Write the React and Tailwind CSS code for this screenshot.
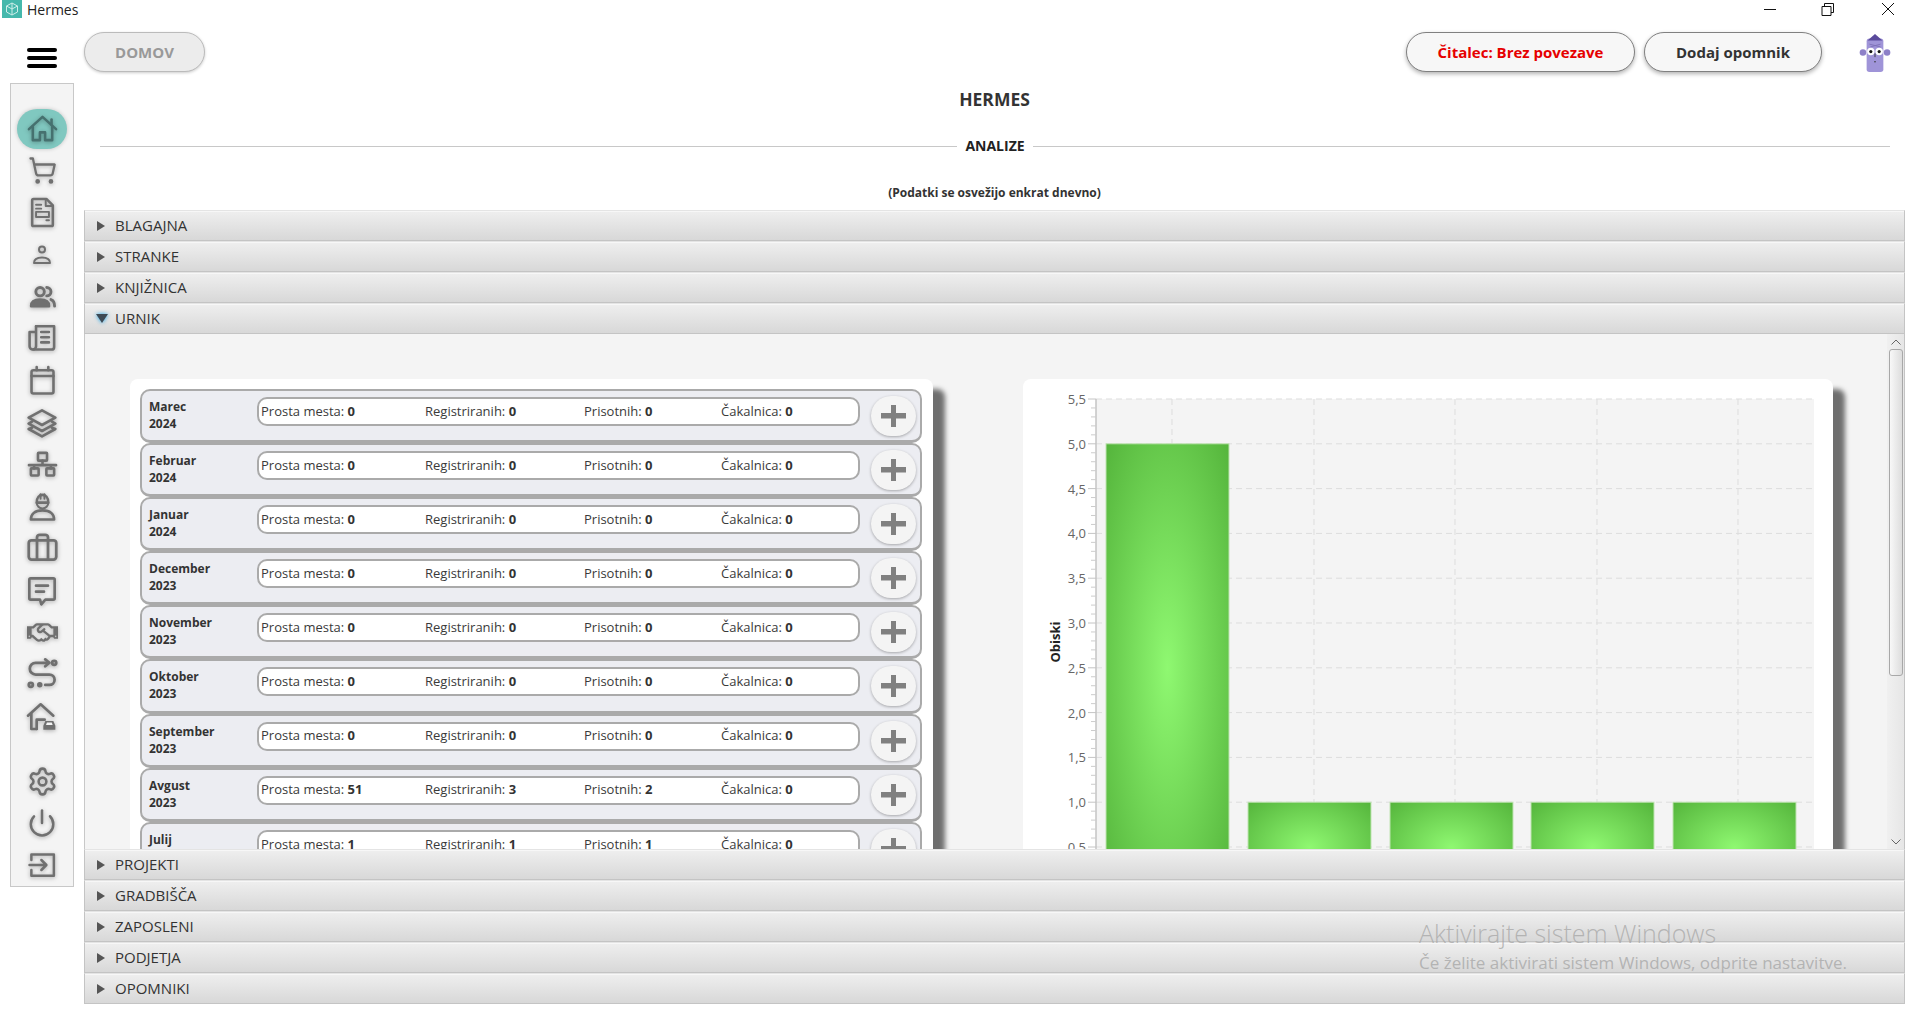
import React from "react";
import { ShoppingCart, Briefcase, Settings, Power } from "lucide-react";
import { FaRegHandshake } from "react-icons/fa";

const months = [
  { name: "Marec", year: 2024, free: 0, reg: 0, here: 0, wait: 0 },
  { name: "Februar", year: 2024, free: 0, reg: 0, here: 0, wait: 0 },
  { name: "Januar", year: 2024, free: 0, reg: 0, here: 0, wait: 0 },
  { name: "December", year: 2023, free: 0, reg: 0, here: 0, wait: 0 },
  { name: "November", year: 2023, free: 0, reg: 0, here: 0, wait: 0 },
  { name: "Oktober", year: 2023, free: 0, reg: 0, here: 0, wait: 0 },
  { name: "September", year: 2023, free: 0, reg: 0, here: 0, wait: 0 },
  { name: "Avgust", year: 2023, free: 51, reg: 3, here: 2, wait: 0 },
  { name: "Julij", year: 2023, free: 1, reg: 1, here: 1, wait: 0 },
];

function Svg({ size = 30, children, className = "text-[#707070]" }) {
  return (
    <svg
      width={size}
      height={size}
      viewBox="0 0 24 24"
      fill="none"
      stroke="currentColor"
      strokeWidth="2"
      strokeLinecap="round"
      strokeLinejoin="round"
      className={className + " drop-shadow-[0_1px_2px_rgba(0,0,0,0.3)]"}
    >
      {children}
    </svg>
  );
}

const HomeIcon = () => (
  <Svg size={31} className="text-[#46716f]">
    <path d="M1.500 12.500 12 3l10.500 9.500" />
    <path d="M19 9V5" />
    <path d="M4.500 10.500V21h5.500v-6h4v6h5.500V10.500" />
  </Svg>
);
const DocIcon = () => (
  <Svg size={31}>
    <path d="M5 1.500h10l5 5V21.500a1 1 0 0 1-1 1H5a1 1 0 0 1-1-1v-19a1 1 0 0 1 1-1z" />
    <path d="M14.500 1.500V7H20" strokeWidth="1.500" />
    <path d="M7 6h4M7 9h4M15 18h2" strokeWidth="1.500" />
    <rect x="7" y="11.500" width="10" height="4" strokeWidth="1.500" />
  </Svg>
);
const PersonIcon = () => (
  <Svg size={24}>
    <circle cx="12" cy="6.500" r="3" />
    <path d="M4 20c0-4 3-5.500 8-5.500s8 1.500 8 5.500z" />
  </Svg>
);
const UsersIcon = () => (
  <Svg size={29}>
    <circle cx="10" cy="8" r="3.500" strokeWidth="2.400" />
    <path d="M2.500 20c0-4 3-5.500 7.500-5.500s7.500 1.500 7.500 5.500z" fill="currentColor" />
    <path d="M15.500 4.500a3.500 3.500 0 0 1 0 7" strokeWidth="2.400" />
    <path d="M19 14.500c2 .7 3 2.500 3 5.500" strokeWidth="2.400" />
  </Svg>
);
const PagesIcon = () => (
  <Svg size={31}>
    <path d="M7 2.500h14v16a2 2 0 0 1-2 2H5" />
    <path d="M7 2.500V18a2.500 2.500 0 0 1-5 0V7h5" />
    <path d="M11 7h6M11 11h6M11 15h6" />
  </Svg>
);
const CalendarIcon = () => (
  <Svg size={31}>
    <rect x="3.500" y="4" width="17" height="18" rx="1.500" />
    <path d="M3.500 8.500h17M7.500 1.500V4M16.500 1.500V4" />
  </Svg>
);
const LayersIcon = () => (
  <Svg size={32}>
    <path d="M12 2.500 22 8l-10 5.500L2 8z" />
    <path d="m4.500 11-2.500 1.500 10 5.500 10-5.500-2.500-1.500" />
    <path d="m4.500 15.500-2.500 1 10 5.500 10-5.500-2.500-1" />
  </Svg>
);
const NetworkIcon = () => (
  <Svg size={31}>
    <rect x="8.500" y="3" width="7" height="6" rx="0.500" />
    <path d="M12 9v3.500M1.500 12.500h21M5.500 12.500V15M18.500 12.500V15" />
    <rect x="3" y="15" width="6" height="5.500" rx="0.500" />
    <rect x="15" y="15" width="6" height="5.500" rx="0.500" />
  </Svg>
);
const WorkerIcon = () => (
  <Svg size={31}>
    <path d="M7.500 9c0-8 9-8 9 0z" />
    <path d="M7.500 9a4.500 4.500 0 0 0 9 0M10.500 2.500V6M13.500 2.500V6" strokeWidth="1.500" />
    <path d="M3 22c0-4 3-7 9-7s9 3 9 7z" />
  </Svg>
);
const MessageIcon = () => (
  <Svg size={32}>
    <path d="M3.500 2.500h17a1 1 0 0 1 1 1v14a1 1 0 0 1-1 1h-6l-3 3.500-1-3.500h-7a1 1 0 0 1-1-1v-14a1 1 0 0 1 1-1z" />
    <path d="M7.500 8h9M7.500 12.500h6" />
  </Svg>
);
const RouteIcon = () => (
  <Svg size={33}>
    <path d="M16.500 3.500H7a4 4 0 0 0 0 8.500h10a3.800 3.800 0 0 1 0 7.600h-3" />
    <path d="m14 1 3 2.500L14 6" />
    <circle cx="20.500" cy="3.500" r="1.500" />
    <circle cx="3.500" cy="19.500" r="1.500" />
    <circle cx="10" cy="19.500" r="1" fill="currentColor" />
  </Svg>
);
const GarageIcon = () => (
  <Svg size={32}>
    <path d="M1.500 11 11 2.500 20.500 11" />
    <path d="M4 9.500V21h4" />
    <path d="M8 21v-7h6" />
    <path d="M13 21.500v-3l1.500-3.500h6l1.500 3.500v3z" fill="currentColor" stroke="none" />
    <path d="M15 18l.7-1.800h3.600l.7 1.800z" fill="#f4f4f4" stroke="none" />
  </Svg>
);
const EnterIcon = () => (
  <Svg size={30}>
    <path d="M3.500 8V3.500h18v17h-18V16" />
    <path d="M2 12h13M11.500 8l4 4-4 4" />
  </Svg>
);

const Lucide = ({ icon: Icon, size = 30, stroke = 2 }) => (
  <Icon size={size} strokeWidth={stroke} className="text-[#707070] drop-shadow-[0_1px_2px_rgba(0,0,0,0.3)]" />
);

const sideIcons = [
  <Lucide key="cart" icon={ShoppingCart} size={29} stroke={1.9} />,
  <DocIcon key="doc" />,
  <PersonIcon key="person" />,
  <UsersIcon key="users" />,
  <PagesIcon key="pages" />,
  <CalendarIcon key="cal" />,
  <LayersIcon key="layers" />,
  <NetworkIcon key="net" />,
  <WorkerIcon key="worker" />,
  <Lucide key="case" icon={Briefcase} size={33} />,
  <MessageIcon key="msg" />,
  <FaRegHandshake key="hand" size={31} className="text-[#707070] drop-shadow-[0_1px_2px_rgba(0,0,0,0.3)]" />,
  <RouteIcon key="route" />,
  <GarageIcon key="garage" />,
];

function Sidebar() {
  return (
    <div className="flex flex-col items-center w-[64px] ml-[10px] mt-[11px] h-[804px] pt-[24px] bg-[#f4f4f4] border border-[#c8c8c8]">
      <div className="h-[42.3px] flex items-center justify-center">
        <div className="w-[50px] h-[40px] rounded-full bg-[#80c8c0] flex items-center justify-center shadow-[0_0_4px_rgba(0,0,0,0.2)]">
          <HomeIcon />
        </div>
      </div>
      {sideIcons.map((icon) => (
        <div key={icon.key} className="h-[42.3px] flex items-center justify-center">
          {icon}
        </div>
      ))}
      <div className="h-[22.7px]" />
      <div className="h-[42.3px] flex items-center justify-center">
        <Lucide icon={Settings} size={31} />
      </div>
      <div className="h-[42.3px] flex items-center justify-center">
        <Lucide icon={Power} size={30} />
      </div>
      <div className="h-[42.3px] flex items-center justify-center">
        <EnterIcon />
      </div>
    </div>
  );
}

function Avatar() {
  return (
    <svg width="32" height="39" viewBox="0 0 34 42">
      <rect x="8" y="6" width="18" height="36" rx="3" fill="#9f94d8" />
      <path d="M9 8 17 1l8 7z" fill="#5a4a9c" />
      <path d="M11 12l12 3M12 15l11-3" stroke="#7d70b8" strokeWidth="1" />
      <circle cx="4" cy="21" r="3.500" fill="#8d80c8" />
      <circle cx="30" cy="21" r="3.500" fill="#8d80c8" />
      <circle cx="12.500" cy="20" r="4" fill="#fff" />
      <circle cx="21.500" cy="20" r="4" fill="#fff" />
      <circle cx="12.500" cy="20" r="1.700" fill="#111" />
      <circle cx="21.500" cy="20" r="1.700" fill="#111" />
      <path d="M17 22v4M16 31h2" stroke="#333" strokeWidth="1" />
    </svg>
  );
}

function TopBar() {
  return (
    <div className="flex items-center h-[40px] mt-[14px] pr-[15px]">
      <button className="w-[121px] h-[40px] pt-[1px] rounded-full bg-[#ececec] border border-[#bbbbbb] text-[#999999] font-bold text-[15px] shadow-[0_1px_3px_rgba(0,0,0,0.2)]">
        DOMOV
      </button>
      <button className="ml-auto w-[229px] h-[40px] pt-[1px] rounded-full bg-[#f7f7f7] border border-[#808080] text-[#e60000] font-bold text-[15px] shadow-[0_2px_4px_rgba(0,0,0,0.3)]">
        Čitalec: Brez povezave
      </button>
      <button className="ml-[9px] w-[178px] h-[40px] pt-[1px] rounded-full bg-[#f7f7f7] border border-[#808080] text-[#333333] font-bold text-[15px] shadow-[0_2px_4px_rgba(0,0,0,0.3)]">
        Dodaj opomnik
      </button>
      <div className="ml-[37px] mr-[14px]">
        <Avatar />
      </div>
    </div>
  );
}

function PaneHeader({ title, open }) {
  return (
    <div className="h-[31px] flex items-center bg-gradient-to-b from-[#efefef] to-[#d8d8d8] border border-[#c4c4c4] border-t-[#e4e4e4] shadow-[inset_0_1px_0_#f7f7f7]">
      {open ? (
        <span className="ml-[11px] w-0 h-0 border-x-[6px] border-x-transparent border-t-[9px] border-t-[#3d4a55] drop-shadow-[0_0_2px_#1aa3e8]" />
      ) : (
        <span className="ml-[12px] w-0 h-0 border-y-[5px] border-y-transparent border-l-[8px] border-l-[#555555]" />
      )}
      <span className={(open ? "ml-[7px]" : "ml-[10px]") + " text-[15px] text-[#333333]"}>{title}</span>
    </div>
  );
}

function MonthRow({ m }) {
  return (
    <div className="h-[54.1px] flex items-start bg-[#ecedf2] border-2 border-b-[3px] border-[#aaaaaa] rounded-[10px]">
      <div className="w-[115px] pl-[7px] pt-[7px] text-[12px] leading-[17px] font-bold text-[#333333]">
        <div>{m.name}</div>
        <div>{m.year}</div>
      </div>
      <div className="w-[603px] h-[29px] mt-[6px] flex items-center pl-[2px] bg-white border-2 border-[#aaaaaa] rounded-[10px] text-[13px] text-[#3a3a3a]">
        <span className="w-[164px]">
          Prosta mesta: <b className="text-[#333333]">{m.free}</b>
        </span>
        <span className="w-[159px]">
          Registriranih: <b className="text-[#333333]">{m.reg}</b>
        </span>
        <span className="w-[137px]">
          Prisotnih: <b className="text-[#333333]">{m.here}</b>
        </span>
        <span>
          Čakalnica: <b className="text-[#333333]">{m.wait}</b>
        </span>
      </div>
      <button className="ml-[11px] mt-[5px] w-[45px] h-[40px] rounded-full bg-[#f4f4f4] flex items-center justify-center shadow-[0_1px_3px_rgba(0,0,0,0.3)]">
        <svg width="25" height="22" viewBox="0 0 25 22">
          <path d="M0 8h10V0h5v8h10v5.500H15V22h-5v-8.500H0z" fill="#808080" />
        </svg>
      </button>
    </div>
  );
}

function Chart() {
  const yTicks = [5.5, 5, 4.5, 4, 3.5, 3, 2.5, 2, 1.5, 1, 0.5];
  const y = (v) => 20 + (5.5 - v) * 89.6;
  const minor = [];
  for (let i = 0; i <= 55; i++) {
    if (i % 5 !== 0) minor.push(20 + i * 8.96);
  }
  const xGrid = [149, 291, 432, 574, 715];
  const bars = [
    { x: 83, v: 5 },
    { x: 225, v: 1 },
    { x: 367, v: 1 },
    { x: 508, v: 1 },
    { x: 650, v: 1 },
  ];
  return (
    <svg width="810" height="540" viewBox="0 0 810 540" className="block">
      <defs>
        <radialGradient id="barFill" cx="50%" cy="50%" r="70%">
          <stop offset="0%" stopColor="#8ff871" />
          <stop offset="100%" stopColor="#55b53c" />
        </radialGradient>
      </defs>
      <rect x="73" y="20" width="718" height="520" fill="#f4f4f4" />
      {yTicks.map((t) => (
        <line key={t} x1="73" x2="791" y1={y(t)} y2={y(t)} stroke="#dddddd" strokeDasharray="6 4" />
      ))}
      {xGrid.map((x) => (
        <line key={x} x1={x} x2={x} y1="20" y2="540" stroke="#dddddd" strokeDasharray="6 4" />
      ))}
      <line x1="73" x2="73" y1="20" y2="540" stroke="#c4c4c4" strokeWidth="1.500" />
      {minor.map((v) => (
        <line key={v} x1="68" x2="73" y1={v} y2={v} stroke="#cccccc" />
      ))}
      {yTicks.map((t) => (
        <g key={t}>
          <line x1="65" x2="73" y1={y(t)} y2={y(t)} stroke="#c4c4c4" />
          <text x="63" y={y(t) + 5} textAnchor="end" fontSize="13" fill="#666666">
            {t.toFixed(1).replace(".", ",")}
          </text>
        </g>
      ))}
      <text
        transform="translate(37 263) rotate(-90)"
        textAnchor="middle"
        fontSize="13"
        fontWeight="700"
        fill="#222222"
      >
        Obiski
      </text>
      {bars.map((b) => (
        <rect
          key={b.x}
          x={b.x}
          y={y(b.v)}
          width="123"
          height={513 - y(b.v)}
          fill="url(#barFill)"
          stroke="#bfe3b2"
        />
      ))}
    </svg>
  );
}

function Scrollbar() {
  return (
    <div className="w-[18px] flex flex-col items-center shrink-0 bg-gradient-to-r from-[#f0f0f0] to-[#e6e6e6] border-r border-[#c4c4c4]">
      <svg width="12" height="8" viewBox="0 0 12 8" className="mt-[4px] mb-[3px]">
        <path d="M1.500 6.500 6 2l4.500 4.500" fill="none" stroke="#666666" />
      </svg>
      <div className="w-[14px] h-[327px] rounded-[3px] border border-[#a8a8a8] bg-gradient-to-r from-[#f8f8f8] to-[#dddddd]" />
      <svg width="12" height="8" viewBox="0 0 12 8" className="mt-auto mb-[3px]">
        <path d="M1.500 1.500 6 6l4.500-4.500" fill="none" stroke="#666666" />
      </svg>
    </div>
  );
}

function UrnikPane() {
  return (
    <div className="h-[515px] flex bg-[#f4f4f4] border-l border-[#c8c8c8] overflow-hidden">
      <div className="flex-1 min-w-0 flex items-start gap-[90px] pl-[45px] pt-[45px] overflow-hidden">
        <div className="w-[803px] shrink-0 h-[560px] pl-[10px] pr-[11px] pt-[10px] bg-white rounded-lg shadow-[12px_10px_5px_rgba(0,0,0,0.55)]">
          {months.map((m) => (
            <MonthRow key={m.name} m={m} />
          ))}
        </div>
        <div className="w-[810px] shrink-0 h-[560px] bg-white rounded-lg shadow-[12px_10px_5px_rgba(0,0,0,0.55)]">
          <Chart />
        </div>
      </div>
      <Scrollbar />
    </div>
  );
}

export default function App() {
  return (
    <div className="relative w-[1920px] h-[1023px] overflow-hidden bg-white font-['Open_Sans',sans-serif]">
      <div className="h-[18px] flex items-center text-[14px] text-[#222222]">
        <div className="ml-[2px] w-[20px] h-[18px] bg-[#45b8ac] flex items-center justify-center">
          <svg width="14" height="14" viewBox="0 0 14 14" fill="none" stroke="#cdeeea" strokeWidth="1">
            <path d="M7 1 12.500 4v6L7 13 1.500 10V4zM7 1v12M1.500 4 7 7l5.500-3" />
          </svg>
        </div>
        <span className="ml-[5px]">Hermes</span>
        <svg width="135" height="16" viewBox="0 0 135 16" className="ml-auto mr-[21px]" fill="none" stroke="#111111">
          <path d="M0 8.500h12" />
          <path d="M58 5.500h9v9h-9zM60.500 5.500v-3h9v9h-2.500" />
          <path d="M118 2l12 12M130 2l-12 12" />
        </svg>
      </div>
      <div className="flex">
        <div className="w-[84px] shrink-0">
          <div className="h-[54px] pt-[30px] pl-[27px]">
            <div className="w-[30px] flex flex-col gap-[4px]">
              <div className="h-[4px] rounded-full bg-black" />
              <div className="h-[4px] rounded-full bg-black" />
              <div className="h-[4px] rounded-full bg-black" />
            </div>
          </div>
          <Sidebar />
        </div>
        <div className="flex-1 min-w-0 pr-[15px]">
          <div className="-mr-[15px]">
            <TopBar />
          </div>
          <div className="pt-[17px] text-center text-[17.500px] leading-[20px] font-bold text-[#333333]">HERMES</div>
          <div className="mt-[28px] flex items-center">
            <div className="ml-[16px] flex-1 h-px bg-[#c8c8c8]" />
            <span className="px-[8px] text-[14px] leading-[18px] font-bold text-[#222222]">ANALIZE</span>
            <div className="mr-[15px] flex-1 h-px bg-[#c8c8c8]" />
          </div>
          <div className="mt-[30px] text-center text-[12px] leading-[16px] font-bold text-[#333333]">
            (Podatki se osvežijo enkrat dnevno)
          </div>
          <div className="mt-[9px]">
            <PaneHeader title="BLAGAJNA" />
            <PaneHeader title="STRANKE" />
            <PaneHeader title="KNJIŽNICA" />
            <PaneHeader title="URNIK" open />
            <UrnikPane />
            <PaneHeader title="PROJEKTI" />
            <PaneHeader title="GRADBIŠČA" />
            <PaneHeader title="ZAPOSLENI" />
            <PaneHeader title="PODJETJA" />
            <PaneHeader title="OPOMNIKI" />
          </div>
        </div>
      </div>
      <div className="absolute left-[1419px] top-[917px] text-[#a8a8a8]/80 pointer-events-none">
        <div className="text-[25px] leading-[32px] font-light">Aktivirajte sistem Windows</div>
        <div className="text-[17px] leading-[22px] mt-[3px]">Če želite aktivirati sistem Windows, odprite nastavitve.</div>
      </div>
    </div>
  );
}
